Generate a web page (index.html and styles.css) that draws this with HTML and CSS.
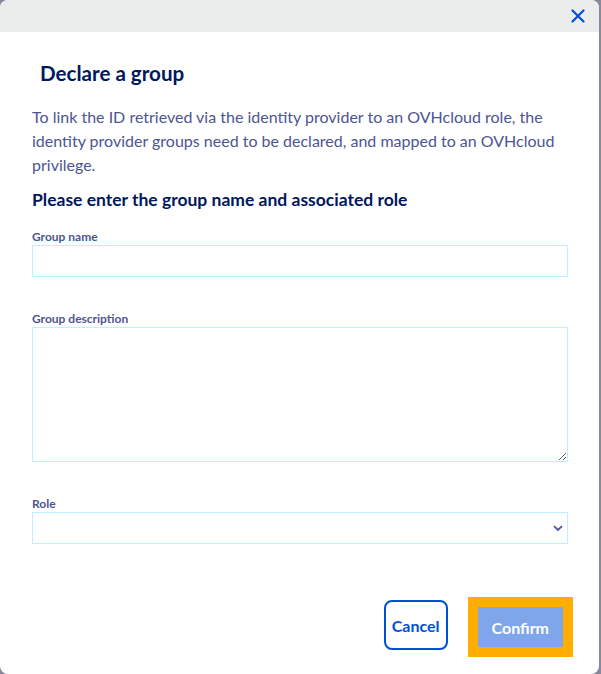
FILE: index.html
```html
<!DOCTYPE html>
<html lang="en">
<head>
    <meta charset="UTF-8">
    <meta name="viewport" content="width=device-width, initial-scale=1.0">
    <title>Declare a group</title>
    <link rel="stylesheet" href="styles.css">
</head>
<body>
    <div class="modal">
        <div class="modal-header">
            <button class="close-btn" type="button" aria-label="Close">
                <svg width="14" height="14" viewBox="0 0 14 14">
                    <path d="M1.5 1.5 L12.5 12.5 M12.5 1.5 L1.5 12.5" stroke="#0050d7" stroke-width="2.2" fill="none" stroke-linecap="round"/>
                </svg>
            </button>
        </div>

        <div class="modal-body">
            <h2 class="modal-title">Declare a group</h2>
            <p class="intro">To link the ID retrieved via the identity provider to an OVHcloud role, the identity provider groups need to be declared, and mapped to an OVHcloud privilege.</p>

            <h3 class="form-heading">Please enter the group name and associated role</h3>

            <form class="group-form">
                <label for="group-name">Group name</label>
                <input type="text" id="group-name">

                <label for="group-desc" class="spaced">Group description</label>
                <textarea id="group-desc"></textarea>

                <label for="group-role" class="spaced">Role</label>
                <div class="select-wrap">
                    <select id="group-role">
                        <option></option>
                    </select>
                    <svg class="chevron" width="10" height="7" viewBox="0 0 10 7">
                        <path d="M1 1.2 L5 5 L9 1.2" stroke="#4d5592" stroke-width="1.8" fill="none"/>
                    </svg>
                </div>
            </form>
        </div>

        <div class="modal-footer">
            <button type="button" class="btn btn-cancel">Cancel</button>
            <button type="button" class="btn btn-confirm" disabled>Confirm</button>
        </div>
    </div>
</body>
</html>
```

FILE: styles.css
```css
/* Fondo detras del modal */
body {
    margin: 0;
    padding: 0;
    background-color: #87889a;
    font-family: Lato, "Open Sans", sans-serif;
}

/* Caja del modal */
.modal {
    width: 599px;
    height: 674px;
    background-color: white;
    border-radius: 8px;
    overflow: hidden;
    display: flex;
    flex-direction: column;
}

/* Barra gris superior con la X */
.modal-header {
    height: 32px;
    background-color: #ebedec;
    display: flex;
    justify-content: flex-end;
    align-items: center;
    padding-right: 14px;
}

.close-btn {
    background: none;
    border: none;
    padding: 0;
    width: 14px;
    height: 14px;
    cursor: pointer;
    display: flex;
}

.modal-body {
    padding: 0 31px 0 32px;
}

.modal-title {
    margin: 27px 0 0 8px;
    font-size: 20.6px;
    line-height: 28px;
    font-weight: 700;
    color: #00185e;
}

.intro {
    margin: 18px 0 0;
    font-size: 16px;
    line-height: 24px;
    color: #4d5592;
}

.form-heading {
    margin: 11px 0 0;
    font-size: 17.5px;
    line-height: 24px;
    font-weight: 700;
    color: #00185e;
}

/* Formulario */
.group-form {
    display: flex;
    flex-direction: column;
    margin-top: 17px;
}

.group-form label {
    font-size: 12px;
    line-height: 16px;
    font-weight: 700;
    color: #4d5592;
}

.group-form label.spaced {
    margin-top: 34px;
}

.group-form input,
.group-form textarea,
.group-form select {
    box-sizing: border-box;
    width: 100%;
    margin: 0;
    border: 1px solid #bef1ff;
    border-radius: 0;
    background-color: white;
    font-family: inherit;
    font-size: 14px;
    color: #4d5592;
    outline: none;
}

.group-form input {
    height: 32px;
}

.group-form textarea {
    height: 135px;
    resize: vertical;
}

.select-wrap {
    position: relative;
}

.group-form select {
    height: 32px;
    appearance: none;
    -webkit-appearance: none;
}

.chevron {
    position: absolute;
    right: 5px;
    top: 13px;
    pointer-events: none;
}

/* Botones del pie */
.modal-footer {
    margin-top: auto;
    display: flex;
    justify-content: flex-end;
    align-items: flex-start;
    gap: 30px;
    padding: 0 36px 24px 0;
}

.btn {
    font-family: inherit;
    font-size: 16px;
    font-weight: 700;
    border-radius: 8px;
    cursor: pointer;
}

.btn-cancel {
    height: 50px;
    padding: 0 6px;
    background-color: white;
    color: #0050d7;
    border: 2px solid #0050d7;
}

.btn-confirm {
    height: 40px;
    padding: 0 14px;
    background-color: #7fa6eb;
    color: white;
    border: none;
    border-radius: 0;
    outline: 10px solid #ffad00;
    margin-top: 7px;
}
```
